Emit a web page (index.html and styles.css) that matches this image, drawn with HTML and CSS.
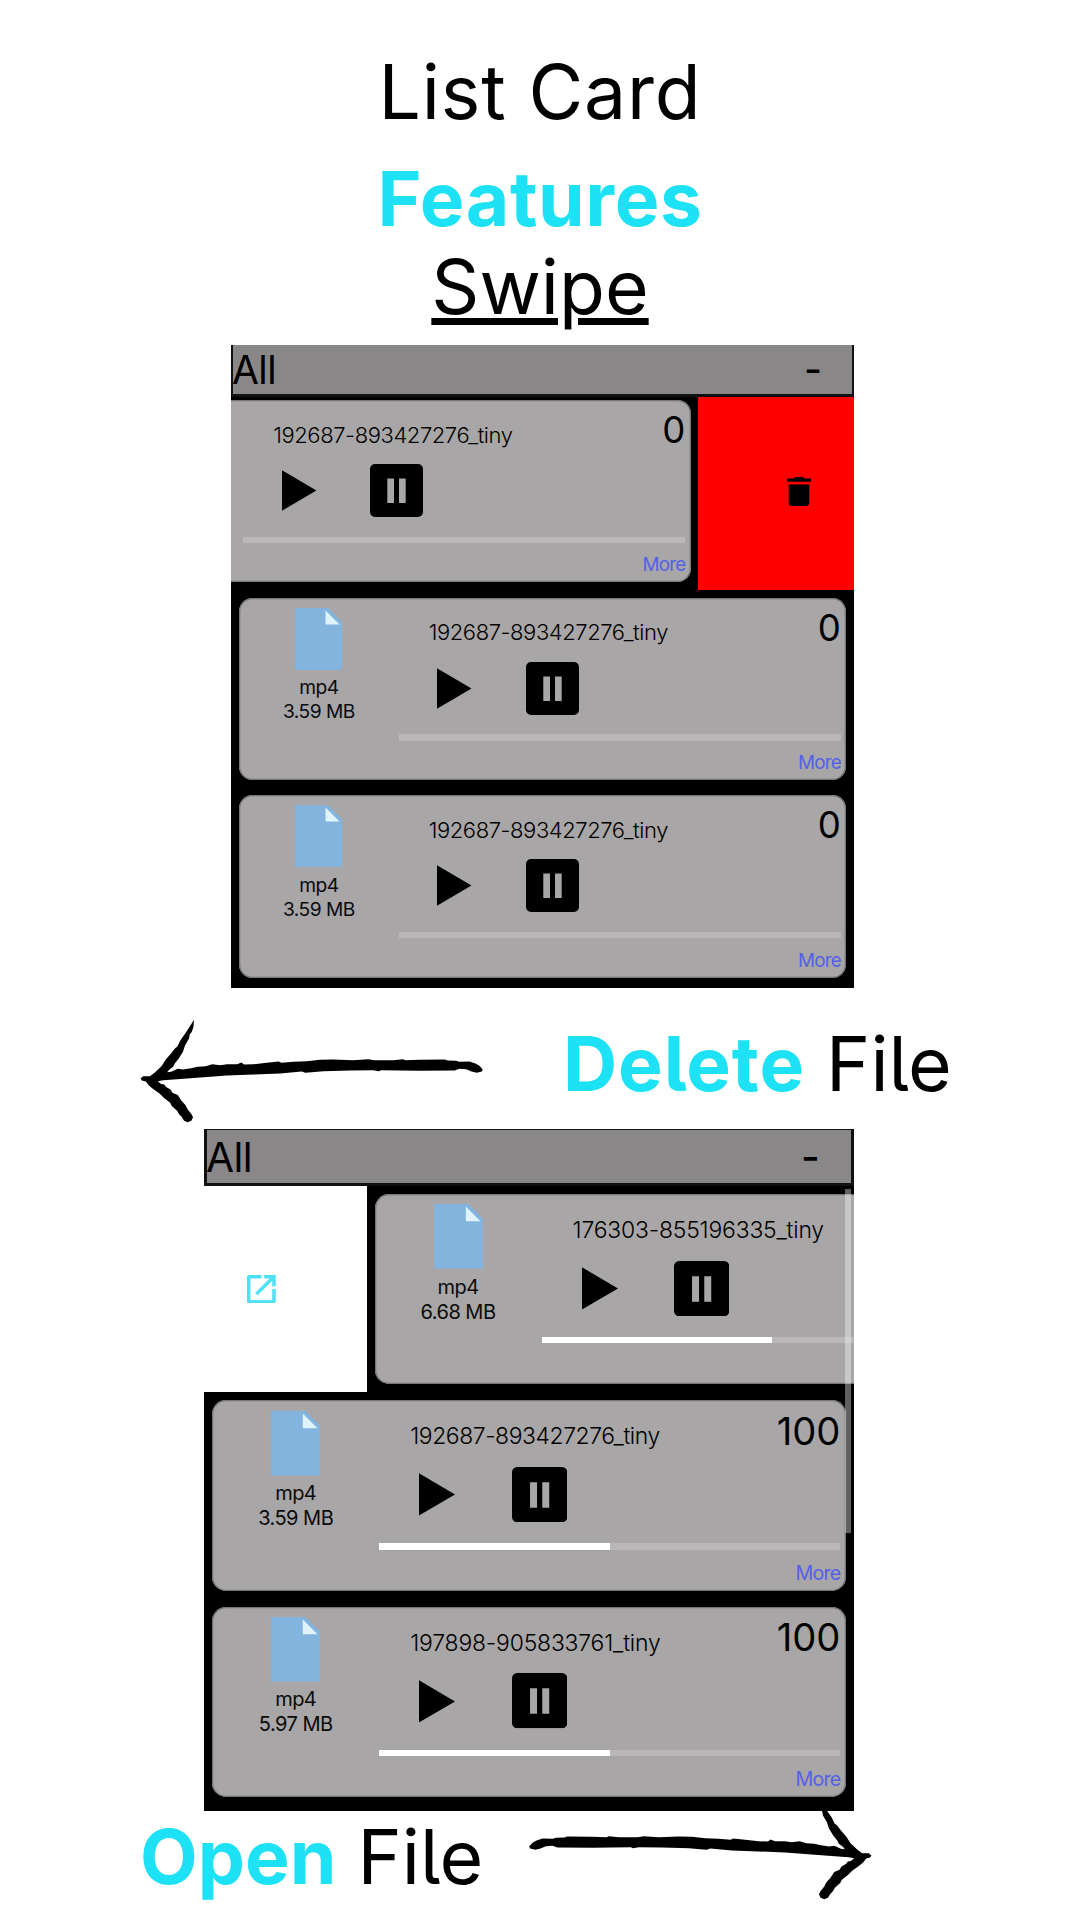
FILE: index.html
```html
<!DOCTYPE html>
<html lang="en">
<head>
<meta charset="utf-8">
<title>List Card Features</title>
<link rel="stylesheet" href="styles.css">
</head>
<body>
<svg class="defs" aria-hidden="true">
  <symbol id="file" viewBox="0 0 47 62"><path fill="#82b4dd" d="M0 0h33l14 14v48H0z"/><path fill="#dff3fd" d="M30.5 2.5v14h14z"/></symbol>
  <symbol id="play" viewBox="0 0 35 41"><path d="M0 0l35 20.500L0 41z"/></symbol>
  <symbol id="pause" viewBox="0 0 53 53"><path fill-rule="evenodd" d="M5 0h43a5 5 0 0 1 5 5v43a5 5 0 0 1-5 5H5a5 5 0 0 1-5-5V5a5 5 0 0 1 5-5zM17.300 14.500V39H24V14.500zM29 14.500V39h6.700V14.500z"/></symbol>
  <symbol id="arrow" viewBox="60 55 1032 313"><path d="M221 57L219 80L214 94L208 102L206 114L194 134L188 153L175 174L163 189L158 199L146 208L140 215L152 214L172 205L188 207L212 203L232 199L256 197L276 191L300 194L320 191L350 191L364 186L371 192L400 191L440 187L476 183L484 187L520 184L560 182L600 178L640 177L700 179L745 176L764 179L820 179L850 176L857 179L900 178L976 177L984 180L1010 181L1018 184L1050 183L1068 189L1080 196L1090 207L1087 213L1072 217L1056 213L1040 206L1020 205L1005 210L900 211L784 209L778 212L760 209L690 210L610 212L575 215L556 217L545 213L480 219L400 222L320 225L240 231L170 236L128 239L112 242L122 251L131 252L137 260L150 267L156 277L172 284L183 301L195 314L202 327L213 341L218 351L213 361L202 366L191 361L184 350L176 342L170 331L154 317L149 307L130 292L117 279L98 266L85 255L76 243L64 240L60 234L68 227L88 227L103 216L123 197L136 177L153 157L164 143L171 138L180 119L197 95Z"/></symbol>
</svg>
<main class="page">
  <header class="title">
    <h1 class="line list">List Card</h1>
    <h1 class="line features">Features</h1>
    <h2 class="line swipe">Swipe</h2>
  </header>

  <section class="panel panel-delete">
    <div class="bar"><span class="all">All</span><span class="fold">-</span></div>
    <div class="rows">
      <div class="row delete">
        <article class="card">
          <div class="info"></div>
          <div class="player">
            <div class="head"><span class="name">192687-893427276_tiny</span><span class="count">0</span></div>
            <div class="controls"><svg class="play"><use href="#play"/></svg><svg class="pause"><use href="#pause"/></svg></div>
            <div class="track"></div>
            <span class="more">More</span>
          </div>
        </article>
        <div class="action"><svg class="trash" viewBox="5 3 14 18" preserveAspectRatio="none"><path d="M6 19c0 1.100.5 2 1.600 2h8.800c1.100 0 1.600-.9 1.600-2V7.600H6zM19 4h-3.800l-1-1H9.800l-1 1H5v1.900h14z"/></svg></div>
      </div>
      <div class="row">
        <article class="card">
          <div class="info"><svg class="file"><use href="#file"/></svg><span>mp4</span><span>3.59 MB</span></div>
          <div class="player">
            <div class="head"><span class="name">192687-893427276_tiny</span><span class="count">0</span></div>
            <div class="controls"><svg class="play"><use href="#play"/></svg><svg class="pause"><use href="#pause"/></svg></div>
            <div class="track"></div>
            <span class="more">More</span>
          </div>
        </article>
      </div>
      <div class="row">
        <article class="card">
          <div class="info"><svg class="file"><use href="#file"/></svg><span>mp4</span><span>3.59 MB</span></div>
          <div class="player">
            <div class="head"><span class="name">192687-893427276_tiny</span><span class="count">0</span></div>
            <div class="controls"><svg class="play"><use href="#play"/></svg><svg class="pause"><use href="#pause"/></svg></div>
            <div class="track"></div>
            <span class="more">More</span>
          </div>
        </article>
      </div>
    </div>
  </section>

  <div class="caption caption-delete">
    <svg class="arrow"><use href="#arrow"/></svg>
    <p class="line"><b class="word-delete">Delete</b> <span class="word-file">File</span></p>
  </div>

  <section class="panel panel-open">
    <div class="bar"><span class="all">All</span><span class="fold">-</span></div>
    <div class="rows">
      <div class="row open">
        <div class="action"><svg class="launch" viewBox="3 3 18 18"><path d="M19 19H5V5h7V3H4.500C3.700 3 3 3.700 3 4.500v15c0 .8.7 1.500 1.500 1.500h15c.8 0 1.500-.7 1.500-1.500V12h-2zM14 3v2h3.590l-9.300 9.300 1.410 1.410L19 6.410V10h2V3z"/></svg></div>
        <article class="card">
          <div class="info"><svg class="file"><use href="#file"/></svg><span>mp4</span><span>6.68 MB</span></div>
          <div class="player">
            <div class="head"><span class="name wide">176303-855196335_tiny</span></div>
            <div class="controls"><svg class="play"><use href="#play"/></svg><svg class="pause"><use href="#pause"/></svg></div>
            <div class="track"><div class="fill" style="width:50%"></div></div>
          </div>
        </article>
      </div>
      <div class="row">
        <article class="card">
          <div class="info"><svg class="file"><use href="#file"/></svg><span>mp4</span><span>3.59 MB</span></div>
          <div class="player">
            <div class="head"><span class="name">192687-893427276_tiny</span><span class="count">100</span></div>
            <div class="controls"><svg class="play"><use href="#play"/></svg><svg class="pause"><use href="#pause"/></svg></div>
            <div class="track"><div class="fill" style="width:50%"></div></div>
            <span class="more">More</span>
          </div>
        </article>
      </div>
      <div class="row">
        <article class="card">
          <div class="info"><svg class="file"><use href="#file"/></svg><span>mp4</span><span>5.97 MB</span></div>
          <div class="player">
            <div class="head"><span class="name wide">197898-905833761_tiny</span><span class="count">100</span></div>
            <div class="controls"><svg class="play"><use href="#play"/></svg><svg class="pause"><use href="#pause"/></svg></div>
            <div class="track"><div class="fill" style="width:50%"></div></div>
            <span class="more">More</span>
          </div>
        </article>
      </div>
      <div class="scrollbar"></div>
    </div>
  </section>

  <div class="caption caption-open">
    <p class="line"><b class="word-open">Open</b> <span class="word-file">File</span></p>
    <svg class="arrow flip"><use href="#arrow"/></svg>
  </div>
</main>
</body>
</html>
```
FILE: styles.css
```css
* { box-sizing: border-box; margin: 0; padding: 0; }
body { background: #fff; color: #000; font-family: Inter, "Liberation Sans", sans-serif; }
.defs { position: absolute; width: 0; height: 0; }
svg { display: block; flex: none; }
.page { width: 1080px; height: 1920px; overflow: hidden; display: flex; flex-direction: column; }

.line { font-size: 75px; font-weight: 380; line-height: 88px; white-space: nowrap; font-feature-settings: "cv05"; }
.title { height: 345px; padding-top: 48px; display: flex; flex-direction: column; align-items: center; }
.list { letter-spacing: .8px; }
.features { margin-top: 19px; font-weight: 700; letter-spacing: .6px; color: #1de2f5; }
.swipe { text-decoration: underline; text-decoration-thickness: 7px; text-underline-offset: 4px; }

.panel { --u: 1px; position: relative; z-index: 1; flex: none; background: #000; overflow: hidden; display: flex; flex-direction: column; }
.panel-delete { width: 623px; height: 643px; margin-left: 231px; }
.panel-open { --u: 1.0434px; width: 650px; height: 682px; margin-left: 204px; }

.bar { flex: none; display: flex; justify-content: space-between; background: #8a8788; border: solid #111; font-weight: 430; font-size: calc(var(--u) * 39); line-height: calc(var(--u) * 49); }
.panel-delete .bar { height: 52px; border-width: 0 2.500px 3px 2.500px; }
.panel-open .bar { height: 57px; border-width: 1px 3px 3px 3px; padding-top: 2px; }
.all { margin-left: -1px; letter-spacing: -.6px; }
.fold { margin-right: calc(var(--u) * 30); font-weight: 500; line-height: calc(var(--u) * 48); }

.rows { position: relative; flex: 1; min-height: 0; overflow: hidden; }
.panel-delete .rows { margin-bottom: 2px; }
.panel-delete .row:first-child { margin-top: -4.800px; }
.row { display: flex; height: calc(var(--u) * 197.800); padding: calc(var(--u) * 7.600) calc(var(--u) * 7.900); }
.row.delete, .row.open { padding: 0; }
.row.delete { justify-content: flex-end; }
.row.delete .card { margin: 7.600px 7.200px 7.600px 0; }
.row.open .card { margin: calc(var(--u) * 7.600) 0 calc(var(--u) * 7.600) calc(var(--u) * 7.500); }
.action { flex: none; width: calc(var(--u) * 156); display: flex; align-items: center; }
.delete .action { background: #f00; padding-left: 89px; }
.open .action { background: #fff; padding-left: 43px; }
.trash { width: 24px; height: 29px; }
.launch { width: 28.500px; height: 28.500px; fill: #4ee0f4; stroke: #4ee0f4; stroke-width: .3px; }

.card { flex: none; width: calc(var(--u) * 607.400); height: calc(var(--u) * 182.600); display: flex; background: #a8a6a7; border-radius: calc(var(--u) * 13.500); box-shadow: inset 0 0 0 1.300px #777475; }
.info { width: calc(var(--u) * 160); padding-top: calc(var(--u) * 10.100); display: flex; flex-direction: column; align-items: center; font-size: calc(var(--u) * 19.200); letter-spacing: calc(var(--u) * -.5); line-height: calc(var(--u) * 24); color: #0b0b0b; }
.file { width: calc(var(--u) * 47); height: calc(var(--u) * 62); margin-bottom: calc(var(--u) * 5.200); }
.player { width: calc(var(--u) * 442); display: flex; flex-direction: column; }
.head { height: calc(var(--u) * 63.900); display: flex; justify-content: space-between; }
.name { padding: calc(var(--u) * 22.900) 0 0 calc(var(--u) * 29.800); font-size: calc(var(--u) * 22); font-weight: 300; letter-spacing: calc(var(--u) * -.42); line-height: calc(var(--u) * 24); }
.name.wide { letter-spacing: calc(var(--u) * -.18); }
.count { padding-top: calc(var(--u) * 10); font-size: calc(var(--u) * 36.600); line-height: calc(var(--u) * 40); }
.controls { height: calc(var(--u) * 53.200); display: flex; align-items: center; padding-left: calc(var(--u) * 38.500); gap: calc(var(--u) * 54); }
.play { width: calc(var(--u) * 34.500); height: calc(var(--u) * 41); }
.pause { width: calc(var(--u) * 53); height: calc(var(--u) * 53); }
.track { height: calc(var(--u) * 6.200); margin-top: calc(var(--u) * 19.800); background: #b9b7b8; }
.fill { height: 100%; background: #fff; }
.more { margin-top: calc(var(--u) * 11.500); align-self: flex-end; font-size: calc(var(--u) * 18.900); letter-spacing: calc(var(--u) * -.8); line-height: calc(var(--u) * 22); color: #5560e8; }
.scrollbar { position: absolute; right: 3px; top: 3px; width: 6px; height: 344px; background: rgba(255, 255, 255, .38); }

.caption { flex: none; display: flex; }
.caption b { font-weight: 700; color: #1de2f5; }
.caption-delete { height: 141px; padding: 31px 0 0 140px; gap: 79px; }
.caption-open { height: 109px; padding-left: 140px; }
.caption-open .line { width: 388px; margin-top: 2px; }
.caption-delete .line { margin-top: 1px; }
.word-delete { letter-spacing: .9px; }
.arrow { width: 344px; height: 104px; }
.flip { transform: scaleX(-1); margin-top: -15px; }
```
